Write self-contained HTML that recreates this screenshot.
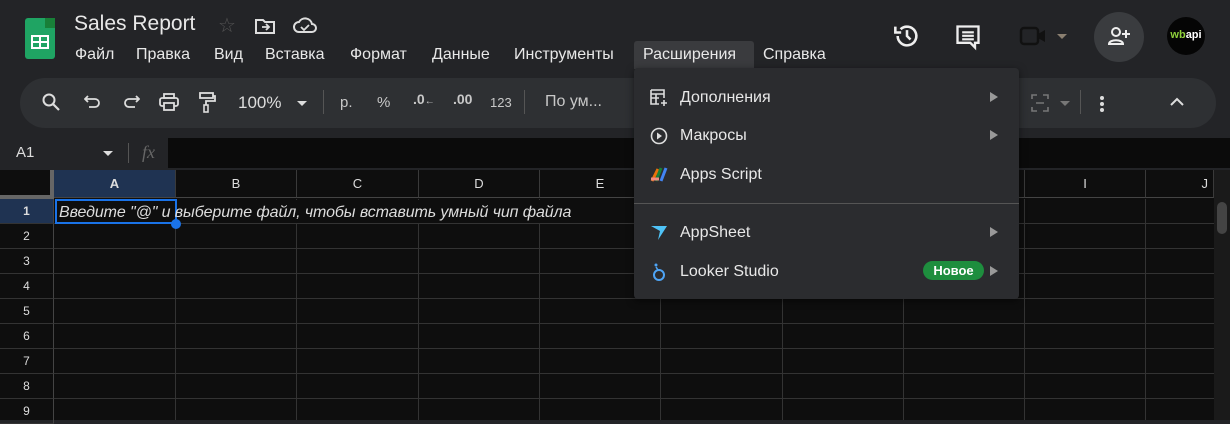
<!DOCTYPE html><html><head><meta charset="utf-8"><style>
*{margin:0;padding:0;box-sizing:border-box}
body{width:1230px;height:420px;overflow:hidden;background:#232427;font-family:"Liberation Sans",Arial,sans-serif;color:#e3e3e3;position:relative}
.a{position:absolute}
.menu span{position:absolute;top:46px;font-size:16px;color:#e8e8e8}
.tb{position:absolute;top:92px;font-size:16px;color:#c8c8c8}
.grid{position:absolute;left:0;top:170px;width:1230px;height:250px;background:#0e0e0e}
.ch{position:absolute;top:0;height:28px;border-right:1px solid #3a3a3a;border-bottom:1px solid #444;font-size:13px;color:#ddd;text-align:center;line-height:28px;background:#0e0e0e}
.rh{position:absolute;left:0;width:54px;border-bottom:1px solid #333;border-right:1px solid #444;font-size:12px;text-align:center;color:#ddd}
.vl{position:absolute;top:29px;width:1px;height:221px;background:#333}
.dd{position:absolute;left:634px;top:68px;width:385px;height:231px;background:#2b2c2f;border-radius:4px;box-shadow:0 2px 8px rgba(0,0,0,.5)}
.it{position:absolute;left:46px;font-size:16px;color:#e8e8e8}
.ar{position:absolute;left:356px;width:0;height:0;border-left:8px solid #999;border-top:5px solid transparent;border-bottom:5px solid transparent}
</style></head><body>
<div class="a" style="left:25px;top:18px;width:30px;height:41px;background:#1fa463;border-radius:3px"></div>
<div class="a" style="left:45px;top:18px;width:10px;height:10px;background:#188038"></div>
<div class="a" style="left:31px;top:35px;width:18px;height:14px;border:2px solid #fff;background:linear-gradient(#fff,#fff) 50% 0/2px 100% no-repeat,linear-gradient(#fff,#fff) 0 50%/100% 2px no-repeat"></div>
<div class="a" style="left:74px;top:12px;font-size:21px;color:#e8e8e8">Sales Report</div>
<div class="a" style="left:218px;top:13px;font-size:20px;color:#555">☆</div>
<svg class="a" style="left:254px;top:16px" width="22" height="20" viewBox="0 0 22 20"><path d="M2 4h7l2 2h9v11H2z" fill="none" stroke="#ddd" stroke-width="2"/><path d="M8 11h7m-3-3l3 3-3 3" stroke="#ddd" stroke-width="1.8" fill="none"/></svg>
<svg class="a" style="left:292px;top:15px" width="26" height="20" viewBox="0 0 26 20"><path d="M7 17a5 5 0 0 1 0-10 7 7 0 0 1 13 2 4 4 0 0 1 0 8z" fill="none" stroke="#ddd" stroke-width="2"/><path d="M9 12l3 3 5-5" stroke="#ddd" stroke-width="1.8" fill="none"/></svg>
<div class="menu"><span style="left:75px">Файл</span><span style="left:136px">Правка</span><span style="left:214px">Вид</span><span style="left:265px">Вставка</span><span style="left:350px">Формат</span><span style="left:432px">Данные</span><span style="left:514px">Инструменты</span><span style="left:634px;top:41px;width:120px;height:28px;background:#3a3b3e;border-radius:3px 3px 0 0"></span><span style="left:643px">Расширения</span><span style="left:763px">Справка</span></div>
<svg class="a" style="left:893px;top:22px" width="28" height="28" viewBox="0 0 24 24"><path d="M4 12a8 8 0 1 0 2.5-5.8" fill="none" stroke="#eee" stroke-width="2.2"/><path d="M2 4v5h5" fill="none" stroke="#eee" stroke-width="2.2"/><path d="M12 7v5l3 3" fill="none" stroke="#eee" stroke-width="2.2"/></svg>
<svg class="a" style="left:954px;top:23px" width="28" height="28" viewBox="0 0 24 24"><path d="M3 3h18v14h-3v4l-4-4H3z" fill="none" stroke="#eee" stroke-width="2"/><path d="M7 8h10M7 11h10M7 14h10" stroke="#eee" stroke-width="1.8"/></svg>
<svg class="a" style="left:1019px;top:25px" width="28" height="22" viewBox="0 0 28 22"><rect x="2" y="3" width="17" height="16" rx="3" fill="none" stroke="#111" stroke-width="2.5"/><path d="M19 9l7-4v12l-7-4z" fill="#111"/></svg>
<div class="a" style="left:1057px;top:34px;border-left:5px solid transparent;border-right:5px solid transparent;border-top:5px solid #8a7f70"></div>
<div class="a" style="left:1094px;top:12px;width:50px;height:50px;border-radius:50%;background:#3a3c3f"></div>
<svg class="a" style="left:1106px;top:24px" width="26" height="26" viewBox="0 0 26 26"><circle cx="10" cy="8" r="4" fill="none" stroke="#eee" stroke-width="2"/><path d="M3 20c0-5 14-5 14 0z" fill="none" stroke="#eee" stroke-width="2"/><path d="M20 6v8M16 10h8" stroke="#eee" stroke-width="2"/></svg>
<div class="a" style="left:1167px;top:17px;width:38px;height:38px;border-radius:50%;background:#050505;overflow:hidden"><div style="position:absolute;left:0;top:12px;font-size:11px;font-weight:bold;color:#8fd13b;width:38px;text-align:center">wb<span style="color:#fff">api</span></div></div>
<div class="a" style="left:20px;top:78px;width:1196px;height:50px;border-radius:25px;background:#2e3033"></div>
<svg class="a" style="left:41px;top:92px" width="20" height="20" viewBox="0 0 20 20"><circle cx="8" cy="8" r="5.5" fill="none" stroke="#ddd" stroke-width="2"/><path d="M12 12l6 6" stroke="#ddd" stroke-width="2.2"/></svg>
<svg class="a" style="left:84px;top:94px" width="18" height="16" viewBox="0 0 18 16"><path d="M4 2L1 5l3 3M1 5h10a4 4 0 0 1 0 8H5" fill="none" stroke="#ddd" stroke-width="1.8"/></svg>
<svg class="a" style="left:122px;top:94px" width="18" height="16" viewBox="0 0 18 16"><path d="M14 2l3 3-3 3M17 5H7a4 4 0 0 0 0 8h6" fill="none" stroke="#ddd" stroke-width="1.8"/></svg>
<svg class="a" style="left:159px;top:93px" width="20" height="18" viewBox="0 0 20 18"><rect x="5" y="1" width="10" height="4" fill="none" stroke="#ddd" stroke-width="1.8"/><rect x="1" y="5" width="18" height="8" rx="2" fill="none" stroke="#ddd" stroke-width="1.8"/><rect x="5" y="10" width="10" height="7" fill="#2e3033" stroke="#ddd" stroke-width="1.8"/></svg>
<svg class="a" style="left:198px;top:92px" width="18" height="22" viewBox="0 0 18 22"><rect x="2" y="1" width="13" height="5" fill="none" stroke="#ddd" stroke-width="1.8"/><path d="M15 4h2v5H8v4" fill="none" stroke="#ddd" stroke-width="1.8"/><rect x="6" y="13" width="4" height="7" fill="none" stroke="#ddd" stroke-width="1.6"/></svg>
<div class="tb" style="left:238px;font-size:17px;top:93px;color:#ddd">100%</div>
<div class="a" style="left:297px;top:101px;border-left:5px solid transparent;border-right:5px solid transparent;border-top:5px solid #ddd"></div>
<div class="a" style="left:323px;top:90px;width:1px;height:24px;background:#555"></div>
<div class="tb" style="left:340px;top:94px;font-size:15px">р.</div><div class="tb" style="left:377px;top:94px;font-size:15px">%</div>
<div class="tb" style="left:413px;top:91px;font-size:14px;font-weight:bold">.0<span style="font-size:10px">←</span></div>
<div class="tb" style="left:453px;top:91px;font-size:14px;font-weight:bold">.00</div>
<div class="tb" style="left:490px;top:95px;font-size:13px">123</div>
<div class="a" style="left:524px;top:90px;width:1px;height:24px;background:#555"></div>
<div class="tb" style="left:545px;top:93px;font-size:16px">По ум...</div>
<svg class="a" style="left:1030px;top:93px" width="20" height="20" viewBox="0 0 20 20"><path d="M2 6V2h5M13 2h5v4M2 14v4h5M13 18h5v-4M6 10h8" fill="none" stroke="#777" stroke-width="1.6"/></svg>
<div class="a" style="left:1060px;top:101px;border-left:5px solid transparent;border-right:5px solid transparent;border-top:5px solid #777"></div>
<div class="a" style="left:1080px;top:90px;width:1px;height:24px;background:#555"></div>
<div class="a" style="left:1100px;top:96px;width:4px;height:4px;border-radius:50%;background:#ddd;box-shadow:0 6px #ddd,0 12px #ddd"></div>
<svg class="a" style="left:1169px;top:97px" width="16" height="10" viewBox="0 0 16 10"><path d="M2 8l6-6 6 6" fill="none" stroke="#ddd" stroke-width="2"/></svg>
<div class="a" style="left:0;top:138px;width:168px;height:30px;background:#232427"></div>
<div class="a" style="left:168px;top:138px;width:1062px;height:30px;background:#0b0b0b"></div>
<div class="a" style="left:16px;top:144px;font-size:15px;color:#ddd">A1</div>
<div class="a" style="left:103px;top:151px;border-left:5px solid transparent;border-right:5px solid transparent;border-top:5px solid #ddd"></div>
<div class="a" style="left:128px;top:143px;width:1px;height:20px;background:#555"></div>
<div class="a" style="left:142px;top:142px;font-size:18px;font-style:italic;color:#666;font-family:'Liberation Serif',serif">fx</div>
<div class="grid">
<div class="a" style="left:0;top:0;width:54px;height:29px;background:#0e0e0e;border-right:4px solid #666;border-bottom:4px solid #666"></div>
<div class="ch" style="left:54px;width:122px;background:#1f3352;font-weight:bold">A</div>
<div class="ch" style="left:176px;width:121px">B</div><div class="ch" style="left:297px;width:122px">C</div><div class="ch" style="left:419px;width:121px">D</div><div class="ch" style="left:540px;width:121px">E</div><div class="ch" style="left:661px;width:122px">F</div><div class="ch" style="left:783px;width:121px">G</div><div class="ch" style="left:904px;width:121px">H</div><div class="ch" style="left:1025px;width:121px">I</div><div class="ch" style="left:1146px;width:68px;text-align:right;padding-right:5px">J</div>
<div class="a" style="left:54px;top:29px;width:1160px;height:221px;background:repeating-linear-gradient(to bottom,transparent 0 24px,#333 24px 25px)"></div>
<div class="vl" style="left:175px"></div><div class="vl" style="left:296px"></div><div class="vl" style="left:418px"></div><div class="vl" style="left:539px"></div><div class="vl" style="left:660px"></div><div class="vl" style="left:782px"></div><div class="vl" style="left:903px"></div><div class="vl" style="left:1024px"></div><div class="vl" style="left:1145px"></div>
<div class="rh" style="top:29px;height:25px;line-height:25px;background:#1f3352;font-weight:bold">1</div>
<div class="rh" style="top:54px;height:25px;line-height:25px">2</div><div class="rh" style="top:79px;height:25px;line-height:25px">3</div><div class="rh" style="top:104px;height:25px;line-height:25px">4</div><div class="rh" style="top:129px;height:25px;line-height:25px">5</div><div class="rh" style="top:154px;height:25px;line-height:25px">6</div><div class="rh" style="top:179px;height:25px;line-height:25px">7</div><div class="rh" style="top:204px;height:25px;line-height:25px">8</div><div class="rh" style="top:229px;height:25px;line-height:25px">9</div>
<div class="a" style="left:55px;top:30px;width:560px;height:23px;background:#0e0e0e"></div>
<div class="a" style="left:55px;top:29px;width:122px;height:25px;border:2px solid #1a73e8"></div>
<div class="a" style="left:171px;top:49px;width:10px;height:10px;border-radius:50%;background:#1a73e8"></div>
<div class="a" style="left:59px;top:34px;font-size:16px;font-style:italic;color:#ddd;letter-spacing:-0.1px">Введите "@" и выберите файл, чтобы вставить умный чип файла</div>
<div class="a" style="left:1214px;top:0;width:16px;height:250px;background:#1a1a1a"></div>
<div class="a" style="left:1217px;top:32px;width:10px;height:32px;border-radius:5px;background:#444"></div>
</div>
<div class="dd">
<svg class="a" style="left:16px;top:21px" width="18" height="18" viewBox="0 0 18 18"><path d="M1 1h13v8M1 1v14h8M1 5h13M1 9h8M6 5v10" fill="none" stroke="#ddd" stroke-width="1.6"/><path d="M14 11v6M11 14h6" stroke="#ddd" stroke-width="1.6"/></svg>
<div class="it" style="top:21px">Дополнения</div><div class="ar" style="top:24px"></div>
<svg class="a" style="left:16px;top:59px" width="18" height="18" viewBox="0 0 18 18"><circle cx="9" cy="9" r="7.5" fill="none" stroke="#ddd" stroke-width="1.6"/><path d="M7 5.5v7l5-3.5z" fill="#ddd"/></svg>
<div class="it" style="top:59px">Макросы</div><div class="ar" style="top:62px"></div>
<svg class="a" style="left:16px;top:98px" width="18" height="18" viewBox="0 0 18 18"><path d="M2 15l6-12" stroke="#e8710a" stroke-width="3"/><path d="M6 15l5-13" stroke="#188038" stroke-width="3"/><path d="M11 15l5-13" stroke="#4285f4" stroke-width="3"/><path d="M1 13h8" stroke="#f28b82" stroke-width="3"/></svg>
<div class="it" style="top:98px">Apps Script</div>
<div class="a" style="left:0;top:135px;width:385px;height:1px;background:#555"></div>
<svg class="a" style="left:16px;top:157px" width="18" height="16" viewBox="0 0 18 16"><path d="M1 1h16l-9 14 2-9z" fill="#4fc3f7"/></svg>
<div class="it" style="top:156px">AppSheet</div><div class="ar" style="top:159px"></div>
<svg class="a" style="left:18px;top:194px" width="14" height="20" viewBox="0 0 14 20"><circle cx="7" cy="13" r="5" fill="none" stroke="#4ea4f5" stroke-width="2"/><circle cx="4" cy="3" r="1.5" fill="#4ea4f5"/><path d="M4 5l2 3" stroke="#4ea4f5" stroke-width="1.5"/></svg>
<div class="it" style="top:195px">Looker Studio</div>
<div class="a" style="left:289px;top:193px;width:61px;height:19px;border-radius:10px;background:#1e8e3e;color:#fff;font-size:13px;font-weight:bold;text-align:center;line-height:19px">Новое</div>
<div class="ar" style="top:198px"></div>
</div>
</body></html>
